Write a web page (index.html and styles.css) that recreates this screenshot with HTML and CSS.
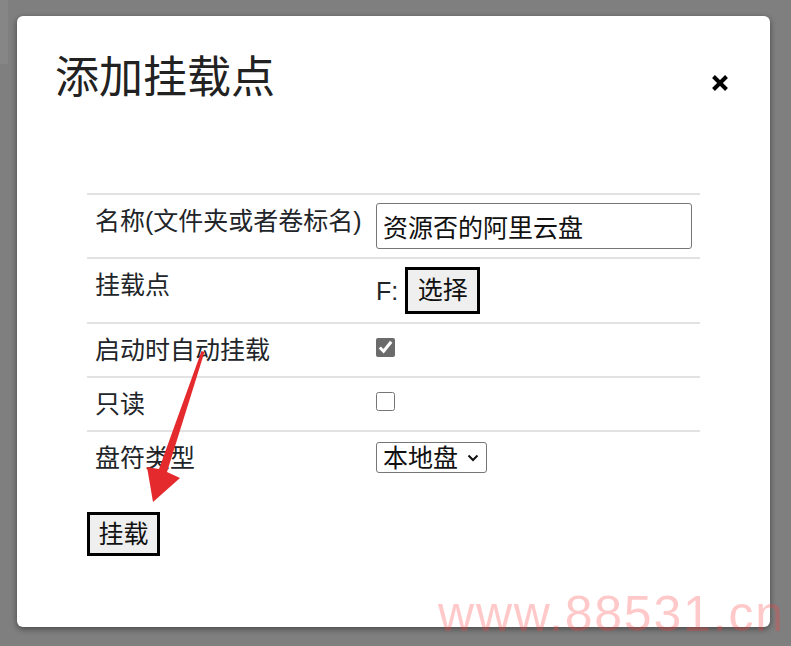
FILE: index.html
```html
<!DOCTYPE html>
<html lang="zh-CN">
<head>
<meta charset="utf-8">
<title>添加挂载点</title>
<link rel="stylesheet" href="styles.css">
</head>
<body>
<div class="backdrop-strip"></div>
<div class="modal">
  <div class="modal-header">
    <h1 class="modal-title">添加挂载点</h1>
    <span class="close" aria-label="关闭">
      <svg width="18" height="18" viewBox="0 0 18 18"><path d="M2.5 2.5 L15.5 15.5 M15.5 2.5 L2.5 15.5" stroke="#000" stroke-width="4" fill="none"/></svg>
    </span>
  </div>
  <table class="form-table">
    <colgroup><col class="col-label"><col class="col-value"></colgroup>
    <tr>
      <td class="label">名称(文件夹或者卷标名)</td>
      <td class="value"><input class="text-input" type="text" value="资源否的阿里云盘"></td>
    </tr>
    <tr>
      <td class="label">挂载点</td>
      <td class="value"><div class="drive-row"><span>F:</span><button class="btn btn-choose">选择</button></div></td>
    </tr>
    <tr>
      <td class="label">启动时自动挂载</td>
      <td class="value"><input class="check" type="checkbox" checked></td>
    </tr>
    <tr>
      <td class="label">只读</td>
      <td class="value"><input class="check" type="checkbox"></td>
    </tr>
    <tr>
      <td class="label">盘符类型</td>
      <td class="value">
        <span class="select-wrap">
          <select class="select"><option>本地盘</option></select>
          <svg class="chevron" width="12" height="8" viewBox="0 0 12 8"><path d="M1.5 1.5 L6 6 L10.5 1.5" stroke="#111" stroke-width="2" fill="none"/></svg>
        </span>
      </td>
    </tr>
  </table>
  <div class="actions"><button class="btn btn-mount">挂载</button></div>
</div>
<svg class="arrow" width="791" height="646" viewBox="0 0 791 646">
  <polygon points="201.5,351 204.5,352 167,472 180,478 153,502 147,467 159,469" fill="#e52a2e"/>
</svg>
<div class="watermark">www.88531.cn</div>
</body>
</html>
```
FILE: styles.css
```css
html, body {
  margin: 0;
  padding: 0;
}
body {
  width: 791px;
  height: 646px;
  background: #7f7f7f;
  font-family: "Liberation Sans", "Noto Sans CJK SC", sans-serif;
  color: #212529;
  position: relative;
  overflow: hidden;
}
.backdrop-strip {
  position: absolute;
  top: 0;
  left: 0;
  width: 8px;
  height: 64px;
  background: #868686;
}
.modal {
  position: relative;
  margin: 16px 0 0 17px;
  width: 753px;
  height: 611px;
  box-sizing: border-box;
  background: #fff;
  border-radius: 6px;
  box-shadow: 0 2px 6px rgba(0, 0, 0, 0.45);
  padding: 31px 41px 0 38px;
}
.modal-header {
  display: flex;
  justify-content: space-between;
  align-items: flex-start;
}
.modal-title {
  margin: 0;
  font-size: 44px;
  line-height: 62px;
  font-weight: normal;
  color: #222;
}
.close {
  display: block;
  margin-top: 27px;
  width: 18px;
  height: 18px;
}
.close svg {
  display: block;
}
.form-table {
  margin: 84px 0 0 32px;
  width: 613px;
  table-layout: fixed;
  border-collapse: collapse;
  font-size: 25px;
  line-height: 36px;
}
.col-label {
  width: 281px;
}
.form-table td {
  border-top: 2px solid #e2e2e2;
  padding: 8px 8px 8px 8px;
  vertical-align: top;
}
.form-table td.label {
  white-space: nowrap;
  overflow: visible;
}
.text-input {
  display: block;
  box-sizing: border-box;
  width: 316px;
  height: 46px;
  margin: 0;
  padding: 0 6px;
  border: 1px solid #767676;
  border-radius: 3px;
  font-family: inherit;
  font-size: 25px;
  color: #111;
  background: #fff;
}
.drive-row {
  display: flex;
  align-items: center;
  gap: 7px;
}
.btn {
  box-sizing: border-box;
  border: 3px solid #000;
  background: #efefef;
  font-family: inherit;
  font-size: 25px;
  color: #111;
  padding: 0;
  margin: 0;
  line-height: 1;
}
.btn-choose {
  width: 75px;
  height: 47px;
}
.check {
  display: block;
  width: 19px;
  height: 19px;
  margin: 6px 0 0 0;
  accent-color: #6b6b6b;
}
.select-wrap {
  position: relative;
  display: block;
  width: 111px;
  margin-top: 2px;
}
.select {
  display: block;
  box-sizing: border-box;
  width: 111px;
  height: 31px;
  margin: 0;
  padding: 0 24px 0 6px;
  border: 1px solid #767676;
  border-radius: 3px;
  background: #fff;
  font-family: inherit;
  font-size: 25px;
  color: #111;
  -webkit-appearance: none;
  appearance: none;
}
.chevron {
  position: absolute;
  right: 8px;
  top: 12px;
  pointer-events: none;
}
.actions {
  margin: 28px 0 0 32px;
}
.btn-mount {
  width: 73px;
  height: 44px;
}
.arrow {
  position: absolute;
  top: 0;
  left: 0;
  pointer-events: none;
}
.watermark {
  position: absolute;
  left: 438px;
  top: 589px;
  font-family: "Liberation Sans", sans-serif;
  font-size: 50px;
  line-height: 50px;
  letter-spacing: 1.8px;
  color: rgba(255, 60, 60, 0.28);
  white-space: nowrap;
}
```
